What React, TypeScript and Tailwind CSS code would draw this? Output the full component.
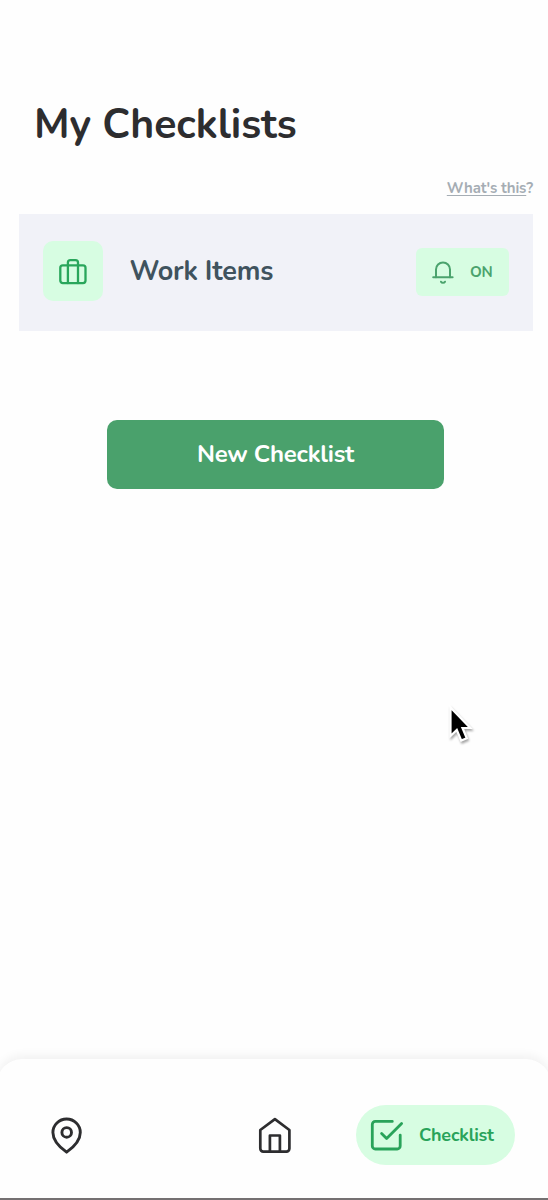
import type { ReactNode } from "react";

function Icon({ className, width, height, children }: { className?: string; width: number; height: number; children: ReactNode }) {
  return (
    <svg className={className} width={width} height={height} viewBox={`0 0 ${width} ${height}`} fill="none" stroke="currentColor" strokeLinecap="round" strokeLinejoin="round" aria-hidden="true">
      {children}
    </svg>
  );
}

function Suitcase() {
  return (
    <Icon width={30} height={30} className="text-[#29a65b]">
      <g strokeWidth="2.3">
        <rect x="2.3" y="9.3" width="25.2" height="17.8" rx="2.5" />
        <path d="M20 27.1V6.6a2.5 2.5 0 0 0-2.5-2.5h-5.1a2.5 2.5 0 0 0-2.5 2.5v20.5" />
      </g>
    </Icon>
  );
}

function Bell() {
  return (
    <Icon width={22} height={24} className="text-[#4ba36d]">
      <g strokeWidth="2">
        <path d="M1.2 17.3h19.4" />
        <path d="M4 17.3V9.4a7 7 0 0 1 14 0v7.9" />
        <path d="M9 21.7c.8 1.5 3.2 1.5 4 0" />
      </g>
    </Icon>
  );
}

function Pin() {
  return (
    <Icon width={32} height={38} className="text-[#2d2d2f]">
      <g strokeWidth="2.9">
        <path d="M29.3 16.4C29.3 24.6 22.5 31.2 15.6 36.2 8.7 31.2 1.9 24.6 1.9 16.4a13.7 13.4 0 0 1 27.4 0Z" />
        <circle cx="15.7" cy="16.4" r="4.8" />
      </g>
    </Icon>
  );
}

function House() {
  return (
    <Icon width={34} height={38} className="text-[#2d2d2f]">
      <g strokeWidth="2.7">
        <path d="M2.3 14 16.9 3.2l14.5 10.8v18.6a3 3 0 0 1-3 3H5.3a3 3 0 0 1-3-3Z" />
        <path d="M11.9 35.6V19.5h10v16.1" />
      </g>
    </Icon>
  );
}

function CheckBox() {
  return (
    <Icon width={34} height={34} className="text-[#29a35a]">
      <g strokeWidth="2.8">
        <path d="M22.3 3.4H5.3a3 3 0 0 0-3 3v21.6a3 3 0 0 0 3 3h21.9a3 3 0 0 0 3-3V17.1" />
        <path d="m11.6 15.6 5 5L31.6 5.4" />
      </g>
    </Icon>
  );
}

export default function App() {
  return (
    <main className="relative flex h-[1200px] w-[548px] flex-col overflow-hidden bg-[#fefefe] font-['Nunito','Lato',sans-serif] font-bold">
      <h1 className="mt-[97px] ml-[34px] h-[56px] text-[41px] leading-[56px] whitespace-nowrap text-[#2d2d2f]">My Checklists</h1>

      <div className="mt-[25px] mr-[15px] flex h-5 justify-end text-[15px] leading-5 tracking-[-0.15px] text-[#a5adb4]">
        <a className="underline decoration-1 underline-offset-2">What's this</a>?
      </div>

      <section className="mt-4 mr-[15px] ml-[19px] flex h-[117px] items-center bg-[#f1f2f8] pr-6 pl-[23.5px]">
        <div className="mt-[-3px] flex size-[60px] items-center justify-center rounded-[10px] bg-[#d7fde2]">
          <Suitcase />
        </div>
        <h2 className="mt-[-1px] ml-[27px] text-[27px] leading-9 tracking-[-0.2px] whitespace-nowrap text-[#40535e]">Work Items</h2>
        <button className="mt-[-1px] ml-auto flex h-12 w-[93px] items-center rounded-md bg-[#d7fde2] pl-4 text-[15px] text-[#4ba36d]">
          <Bell />
          <span className="ml-4 tracking-[-0.2px]">ON</span>
        </button>
      </section>

      <button className="mt-[89px] ml-[107px] h-[69px] w-[337px] rounded-[10px] bg-[#4aa16c] pb-[2px] text-2xl tracking-[-0.22px] text-white">
        New Checklist
      </button>

      <nav className="-mx-[3px] mt-auto flex h-[141px] items-center rounded-t-[25px] border-b-2 border-[#747071] bg-[#fefefe] px-[3px] pt-[13px] shadow-[0_-4px_10px_rgba(0,0,0,0.05)]">
        <button className="ml-[51px]" aria-label="Places"><Pin /></button>
        <button className="ml-[175px]" aria-label="Home"><House /></button>
        <button className="ml-16 flex h-[60px] w-[159px] items-center rounded-full bg-[#d7fde2] pl-[14px] text-[18px] text-[#29a35a]">
          <CheckBox />
          <span className="ml-[15px] tracking-[-0.2px]">Checklist</span>
        </button>
      </nav>

      <svg className="absolute top-[703px] left-[445px] drop-shadow-[1px_2px_1px_rgba(0,0,0,0.35)]" width="30" height="42" viewBox="0 0 30 42" aria-hidden="true">
        <path d="M5.5 4.5v28.5l6.3-6 4.4 10.5 5.6-2.3-4.3-10.2h7.8Z" fill="#000" stroke="#fff" strokeWidth="2.2" />
      </svg>
    </main>
  );
}
